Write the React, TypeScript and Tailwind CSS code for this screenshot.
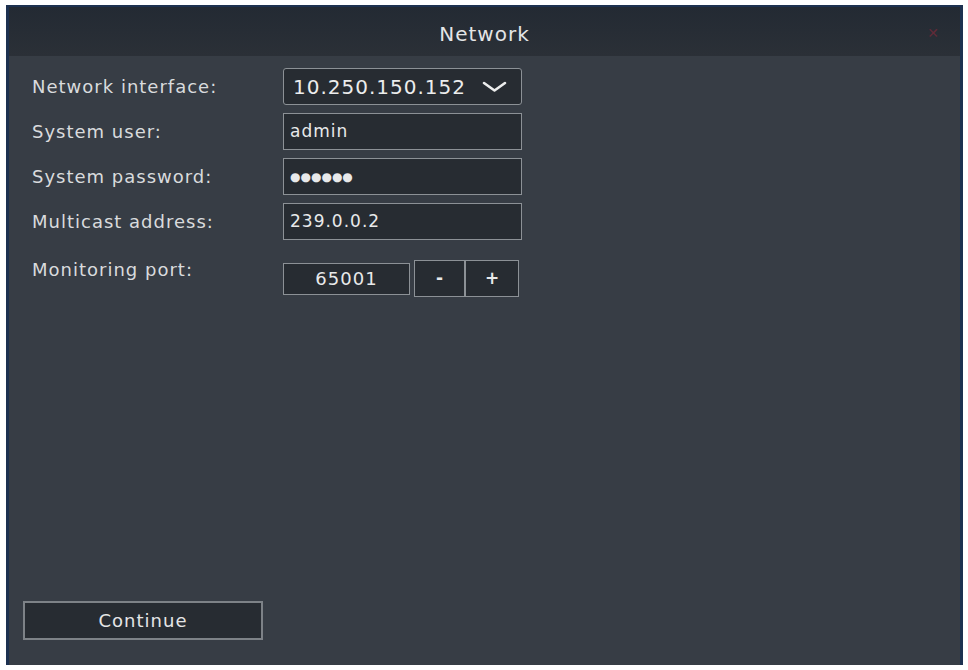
const font = { fontFamily: '"DejaVu Sans", Verdana, sans-serif' };

function Field({ label, value, password }: { label: string; value: string; password?: boolean }) {
  return (
    <div className="flex h-[45px] items-center">
      <span className="w-[251px] text-[18px] tracking-[1px] text-[#d9dbdd]">{label}</span>
      <div className="flex h-[37px] w-[239px] items-center border border-[#8c9196] bg-[#272c32] px-[6px] text-[17px] tracking-[1px] text-[#e8e9ea]">
        {password ? <span className="text-[12px] tracking-[0px]">●●●●●●</span> : value}
      </div>
    </div>
  );
}

export default function App() {
  return (
    <div className="h-[670px] w-[968px] bg-white pl-[6px] pt-[5px]" style={font}>
      <div className="flex h-[660px] w-[957px] flex-col border-l-[3px] border-r-[3px] border-t-[2px] border-[#1d3150] bg-[#373d45]">
        {/* title bar */}
        <div className="relative flex h-[49px] shrink-0 items-center justify-center bg-gradient-to-b from-[#232a33] to-[#2b3037] pt-[5px] text-[20px] tracking-[1px] text-[#e4e5e6]">
          Network
          <span className="absolute right-[20px] top-[16px] text-[14px] text-[#7a2a3a] opacity-70">✕</span>
        </div>

        {/* body */}
        <div className="flex flex-1 flex-col px-[23px] pb-[25px] pt-[8px]">
          <div className="flex h-[45px] items-center">
            <span className="w-[251px] text-[18px] tracking-[1px] text-[#d9dbdd]">Network interface:</span>
            <div className="flex h-[37px] w-[239px] items-center justify-between rounded-[3px] border border-[#8c9196] bg-[#272c32] pl-[9px] pr-[14px] text-[20px] tracking-[1px] text-[#eceded]">
              <span>10.250.150.152</span>
              <svg width="25" height="12" viewBox="0 0 25 12" fill="none">
                <polyline points="2,2 12.5,9.5 23,2" stroke="#eceded" strokeWidth="2.6" strokeLinecap="round" strokeLinejoin="round" />
              </svg>
            </div>
          </div>
          <Field label="System user:" value="admin" />
          <Field label="System password:" value="" password />
          <Field label="Multicast address:" value="239.0.0.2" />

          <div className="flex pt-[9px]">
            <span className="w-[251px] pt-[3px] text-[18px] tracking-[1px] text-[#d9dbdd]">Monitoring port:</span>
            <div className="flex items-center gap-[4px] pt-[7px]">
              <div className="flex h-[32px] w-[127px] items-center justify-center border border-[#8c9196] bg-[#272c32] text-[18px] tracking-[1px] text-[#e8e9ea]">
                65001
              </div>
              <div className="flex h-[37px] border border-[#8c9196] bg-[#272c32] text-[17px] font-bold text-[#e8e9ea]">
                <button className="w-[51px] border-r-[2px] border-[#8c9196]">-</button>
                <button className="w-[52px]">+</button>
              </div>
            </div>
          </div>

          <div className="flex-1" />

          <button className="ml-[-9px] h-[39px] w-[240px] border-2 border-[#7d8287] bg-[#272c32] text-[18px] tracking-[1px] text-[#e4e5e6]">
            Continue
          </button>
        </div>
      </div>
    </div>
  );
}
